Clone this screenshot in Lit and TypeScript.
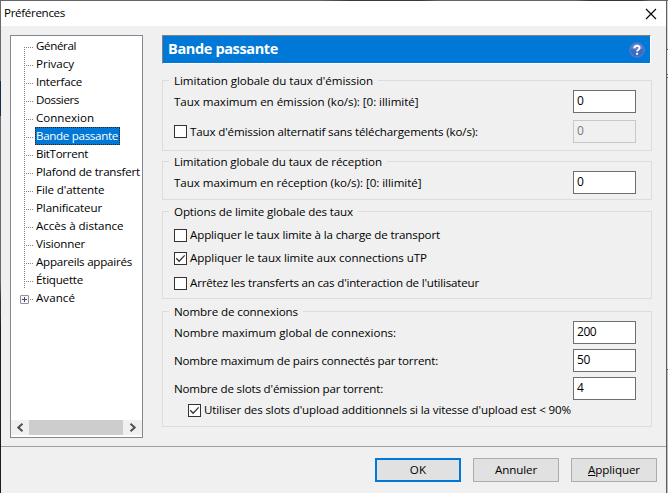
import { LitElement, html, css, nothing } from "lit";
import { customElement, property } from "lit/decorators.js";

/* One line of text whose tracking is adjusted so that it spans `span` pixels. */
@customElement("fit-text")
class FitText extends LitElement {
  @property({ type: Number }) span = 0;
  static styles = css`
    :host { display: block; white-space: pre; width: max-content; }
  `;
  render() {
    return html`<slot></slot>`;
  }
  firstUpdated() {
    const n = (this.textContent || "").length;
    if (!this.span || n < 2) return;
    const natural = this.getBoundingClientRect().width;
    this.style.letterSpacing = `${(this.span - natural) / n}px`;
  }
}

@customElement("check-box")
class CheckBox extends LitElement {
  @property() label = "";
  @property({ type: Number }) span = 0;
  @property({ type: Boolean }) checked = false;
  static styles = css`
    :host { display: flex; align-items: center; gap: 3px; height: 18px; }
    .box { width: 11px; height: 11px; border: 1px solid #333; background: #fff; flex: none; }
    svg { display: block; }
  `;
  render() {
    return html`<span class="box">${this.checked
        ? html`<svg width="11" height="11" viewBox="0 0 11 11"><path d="M1.3 5.3 L4.1 8.2 L9.7 2.4" fill="none" stroke="#333" stroke-width="1.3"/></svg>`
        : nothing}</span><fit-text .span=${this.span}>${this.label}</fit-text>`;
  }
}

@customElement("pref-tree")
class PrefTree extends LitElement {
  static items: [string, number][] = [
    ["Général", 40], ["Privacy", 38], ["Interface", 46], ["Dossiers", 43],
    ["Connexion", 58], ["Bande passante", 82], ["BitTorrent", 52],
    ["Plafond de transfert", 104], ["File d'attente", 68.5], ["Planificateur", 66],
    ["Accès à distance", 87.5], ["Visionner", 49], ["Appareils appairés", 96],
    ["Étiquette", 47], ["Avancé", 39],
  ];
  static styles = css`
    :host { display: flex; flex-direction: column; box-sizing: border-box; width: 133px; height: 403px;
      border: 1px solid #828790; background: #fff; padding: 1px 0; }
    .list { flex: 1; overflow: hidden; }
    .row { display: grid; grid-template-columns: 14px 10px 1fr; height: 18px; }
    .v { background: repeating-linear-gradient(to bottom, #808080 0 1px, transparent 1px 2px) right / 1px 100% no-repeat; }
    .first .v { background-size: 1px 8px; background-position: right bottom; }
    .h { height: 1px; margin-top: 10px; width: 8px;
      background: repeating-linear-gradient(to right, transparent 0 1px, #808080 1px 2px); }
    .name { box-sizing: border-box; height: 18px; line-height: 17px; padding-left: 1px; width: max-content; }
    .sel { background: #0078d7; color: #fff; width: 85px; outline: 1px dotted #402000; outline-offset: -1px; }
    .last .v { background: none; display: flex; padding: 6px 0 0 9px; }
    .last .h { width: 4px; margin-left: 4px; }
    .bar { display: grid; grid-template-columns: 18px 94px 18px; height: 15px; margin: 0 0 1px; background: #f0f0f0; }
    .thumb { background: #cdcdcd; }
    svg { display: block; flex: none; }
  `;
  render() {
    const items = PrefTree.items;
    return html`
      <div class="list">
        ${items.map(([t, w], i) => html`
          <div class="row ${i === 0 ? "first" : i === items.length - 1 ? "last" : ""}">
            <span class="v">${i === items.length - 1
              ? html`<svg width="9" height="9" viewBox="0 0 9 9"><rect x=".5" y=".5" width="8" height="8" rx=".5" fill="#f6f6f8" stroke="#919191"/><path d="M2 4.5h5M4.5 2v5" stroke="#364a8c"/></svg>`
              : nothing}</span>
            <span class="h"></span>
            <div class="name ${i === 5 ? "sel" : ""}"><fit-text .span=${w}>${t}</fit-text></div>
          </div>`)}
      </div>
      <div class="bar">
        <svg width="18" height="15"><path d="M11.5 3.7 L7.3 7.5 L11.5 11.3" fill="none" stroke="#505050" stroke-width="2"/></svg>
        <span class="thumb"></span>
        <svg width="18" height="15"><path d="M7.5 3.7 L11.7 7.5 L7.5 11.3" fill="none" stroke="#505050" stroke-width="2"/></svg>
      </div>`;
  }
}

@customElement("app-root")
class AppRoot extends LitElement {
  static styles = css`
    :host { display: grid; grid-template-columns: 1px 665px 1px 1px; grid-template-rows: 1px 492px;
      width: 668px; height: 493px; overflow: hidden; background: #f0f0f0; color: #000;
      font: 11.6px/18px "Open Sans", "Noto Sans", sans-serif; }
    .top { grid-column: 1 / -1; background: linear-gradient(to right, #666 0 320px, #3d3638 350px 420px, #666 440px 575px, #3a3234 590px 640px, #666 650px); }
    .left { background: linear-gradient(#6b6b6b 0 80px, #173043 80px 115px, #6b6b6b 115px 280px, #333 300px 312px, #1c1c1c 330px); }
    .edge { background: #5f5f5f; }
    .out { background: linear-gradient(#d5d5d5 0 48px, #555 48px 49px, #e2e2e2 49px 73px, #666 73px 74px, #eee 74px 76px, #666 76px 77px, #d8d8d8 77px 368px, #555 368px 369px, #bbb 369px); }
    .win { display: grid; grid-template-rows: 25px 421px 45px; }
    .title { display: flex; justify-content: space-between; align-items: center; background: #fff; padding: 0 9px 0 3px; }
    .title fit-text { margin-top: -1px; }
    .main { display: grid; grid-template-columns: 133px 490px; column-gap: 19px; padding: 9px 0 0 9px; align-content: start; border-bottom: 1px solid #a0a0a0; }
    .head { box-sizing: border-box; width: 489px; height: 29px; margin-bottom: 8px; display: flex; align-items: center; justify-content: space-between;
      background: #0078d7; border: 1px solid; border-color: #808080 #fff #fff #808080; padding: 0 5px; color: #fff; font-weight: 700; font-size: 14.5px; }
    .head fit-text { margin-top: -2px; }
    fieldset { box-sizing: border-box; width: 490px; min-width: 0; margin: 0; border: 1px solid #dcdcdc; padding: 1px 15px 0 11px; }
    legend { padding: 0 5px; margin-left: -5px; height: 17px; line-height: 17px; }
    .g1 { height: 79px; margin-bottom: 2px; }
    .g2 { height: 47px; margin-bottom: 3px; }
    .g3 { height: 96px; margin-bottom: 4px; }
    .g4 { height: 124px; }
    .line { display: flex; justify-content: space-between; align-items: center; height: 23px; }
    .field { box-sizing: border-box; width: 63px; height: 23px; border: 1px solid #6e6e6e; background: #fff; padding-left: 3px; line-height: 20px; font-size: 12px; letter-spacing: -.45px; }
    .off { background: #f0f0f0; border-color: #c8c8c8; color: #7a7a7a; }
    .g1 .line + .line { margin-top: 7px; }
    .g4 .line + .line { margin-top: 5px; }
    .g3 check-box + check-box { margin-top: 5px; }
    .g3 check-box + check-box + check-box { margin-top: 7px; }
    .g3 check-box:first-of-type { margin-top: 5px; }
    .sub { margin: 1px 0 0 14px; }
    .foot { display: flex; justify-content: flex-end; gap: 12px; padding: 11px 9px 0 0; }
    .btn { box-sizing: border-box; width: 86px; height: 24px; border: 1px solid #adadad; background: #e1e1e1; display: flex; justify-content: center; line-height: 22px; }
    .def { border: 2px solid #0078d7; line-height: 20px; }
    svg { display: block; flex: none; }
  `;
  private line(label: string, span: number, value: string) {
    return html`<div class="line"><fit-text .span=${span}>${label}</fit-text><div class="field">${value}</div></div>`;
  }
  render() {
    return html`
      <div class="top"></div>
      <div class="left"></div>
      <div class="win">
        <div class="title"><fit-text .span=${61}>Préférences</fit-text>
          <svg width="12" height="12" viewBox="0 0 12 12"><path d="M1 1 L11 11 M11 1 L1 11" stroke="#000" stroke-width="1.1"/></svg>
        </div>
        <div class="main">
          <pref-tree></pref-tree>
          <div>
            <div class="head"><fit-text .span=${110}>Bande passante</fit-text>
              <svg width="16" height="16" viewBox="0 0 16 16"><circle cx="8" cy="8" r="7.2" fill="#4169be" stroke="#5c82cf"/><path d="M2 6.5 A6.2 6.2 0 0 1 14 6.5 Q8 9 2 6.5Z" fill="#7d9be0" opacity=".6"/><path d="M5.4 6.2 C5.4 3 10.7 3 10.6 6 C10.5 7.8 8.1 7.6 8.1 9.6" fill="none" stroke="#fff" stroke-width="1.9"/><rect x="7.1" y="10.8" width="2" height="2" fill="#fff"/></svg>
            </div>
            <fieldset class="g1"><legend><fit-text .span=${199}>Limitation globale du taux d'émission</fit-text></legend>
              ${this.line("Taux maximum en émission (ko/s): [0: illimité]", 244.5, "0")}
              <div class="line"><check-box label="Taux d'émission alternatif sans téléchargements (ko/s):" .span=${288}></check-box><div class="field off">0</div></div>
            </fieldset>
            <fieldset class="g2"><legend><fit-text .span=${208}>Limitation globale du taux de réception</fit-text></legend>
              ${this.line("Taux maximum en réception (ko/s): [0: illimité]", 247.5, "0")}
            </fieldset>
            <fieldset class="g3"><legend><fit-text .span=${179}>Options de limite globale des taux</fit-text></legend>
              <check-box label="Appliquer le taux limite à la charge de transport" .span=${250}></check-box>
              <check-box checked label="Appliquer le taux limite aux connections uTP" .span=${237}></check-box>
              <check-box label="Arrêtez les transferts an cas d'interaction de l'utilisateur" .span=${289}></check-box>
            </fieldset>
            <fieldset class="g4"><legend><fit-text .span=${124}>Nombre de connexions</fit-text></legend>
              ${this.line("Nombre maximum global de connexions:", 222, "200")}
              ${this.line("Nombre maximum de pairs connectés par torrent:", 264, "50")}
              ${this.line("Nombre de slots d'émission par torrent:", 209, "4")}
              <check-box class="sub" checked label="Utiliser des slots d'upload additionnels si la vitesse d'upload est < 90%" .span=${367}></check-box>
            </fieldset>
          </div>
        </div>
        <div class="foot">
          <div class="btn def"><fit-text .span=${16.5}>OK</fit-text></div>
          <div class="btn"><fit-text .span=${42}>Annuler</fit-text></div>
          <div class="btn"><fit-text .span=${52}><u>A</u>ppliquer</fit-text></div>
        </div>
      </div>
      <div class="edge"></div>
      <div class="out"></div>`;
  }
}
